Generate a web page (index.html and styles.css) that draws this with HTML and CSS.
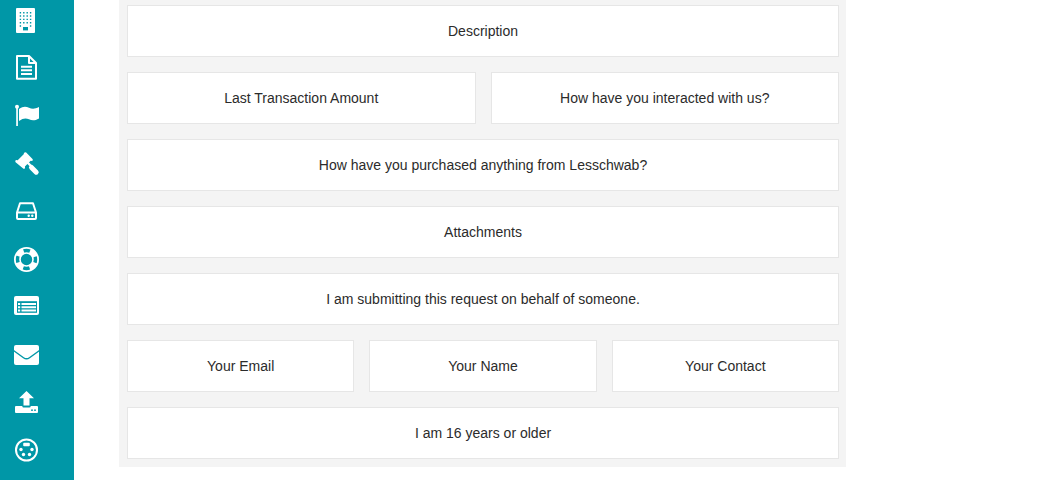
FILE: index.html
```
<!DOCTYPE html>
<html lang="en">
<head>
  <meta charset="UTF-8" />
  <meta name="viewport" content="width=device-width, initial-scale=1.0" />
  <title>Form Layout</title>
  <link rel="stylesheet" href="styles.css">
</head>
<body>
  <nav class="sidebar">
    <a href="#" aria-label="Company">
      <svg class="icon" viewBox="0 0 26 26">
        <rect x="2" y="2" width="19" height="25" rx="1" />
        <path class="cut-line" stroke-width="1.4" stroke-dasharray="1.4 2" d="M5.700 6.700h12M5.700 10h12M5.700 13.400h12M5.700 16.700h12M5.700 20h2M15.900 20h2" />
        <rect class="cut" x="9" y="21" width="5" height="3.400" />
      </svg>
    </a>
    <a href="#" aria-label="Documents">
      <svg class="icon" viewBox="0 0 26 26">
        <path class="line" stroke-width="2" stroke-linejoin="round" d="M3 2h12l7 7v15.700H3zM15 2v7h7" />
        <path class="line" stroke-width="2" d="M7 12.700h11M7 16.300h11M7 20h11" />
      </svg>
    </a>
    <a href="#" aria-label="Flags">
      <svg class="icon" viewBox="0 0 26 26">
        <circle cx="3" cy="4.700" r="2" />
        <rect x="2.200" y="5" width="1.700" height="19" />
        <path d="M5 7C9 4 12 4.300 15 5.700S21 7 25 5v11.500c-4 2.300-7 2.300-10 .8S9 16 5 19z" />
      </svg>
    </a>
    <a href="#" aria-label="Legal">
      <svg class="icon" viewBox="0 0 26 26">
        <path d="M10 3q1-1.500 2.200-.4l6.300 6.300q1 1.200-.4 2l-1.400-.2-5.800 5.800.2 1.400q-1 1.600-2.200.4L1.600 12.300q-1-1.300.4-2.200l1.700.2 6-6z" />
        <path class="line" stroke-width="2.400" d="M13 12l4 4" />
        <path class="line" stroke-width="5" stroke-linecap="round" d="M17.500 17.500l4.700 4.700" />
      </svg>
    </a>
    <a href="#" aria-label="Storage">
      <svg class="icon" viewBox="0 0 26 26">
        <path class="line" stroke-width="2" stroke-linejoin="round" d="M3 14.500L6 5.300h13l3 9.200v5.500q0 1-1 1H4q-1 0-1-1zM3 14.500h19" />
        <circle cx="14.700" cy="17.700" r="1.200" />
        <circle cx="18.300" cy="17.700" r="1.200" />
      </svg>
    </a>
    <a href="#" aria-label="Support">
      <svg class="icon" viewBox="0 0 26 26">
        <circle class="line" cx="12.500" cy="13.500" r="11.600" stroke-width="1.800" />
        <circle class="line" cx="12.500" cy="13.500" r="9" stroke-width="5" stroke-dasharray="7.740 6.400" stroke-dashoffset="-3.200" />
        <circle class="line" cx="12.500" cy="13.500" r="6.500" stroke-width="1.600" />
      </svg>
    </a>
    <a href="#" aria-label="Lists">
      <svg class="icon" viewBox="0 0 26 26">
        <rect x="0" y="2" width="25" height="19" rx="2" />
        <rect class="cut" x="3" y="7.200" width="20" height="11.600" />
        <path class="line" stroke-width="2" d="M4 10h2.200M7.500 10H22M4 13.200h2.200M7.500 13.200H22M4 16.500h2.200M7.500 16.500H22" />
      </svg>
    </a>
    <a href="#" aria-label="Mail">
      <svg class="icon" viewBox="0 0 26 26">
        <rect x="0" y="3" width="25" height="20" rx="2" />
        <path class="cut-line" stroke-width="1.400" d="M-.5 8.500L9.500 15.700q3 2.200 6 0L25.500 8.500" />
      </svg>
    </a>
    <a href="#" aria-label="Upload">
      <svg class="icon" viewBox="0 0 26 26">
        <path d="M12.500 1l7.500 7.200h-4.500v7.300h-6V8.200H5z" />
        <path d="M2 16h6.200q.3 1.500 1.300 1.500h6q1 0 1.300-1.500H23q1 0 1 1v5q0 1-1 1H2q-1 0-1-1v-5q0-1 1-1z" />
        <circle class="cut" cx="18" cy="20.200" r=".9" />
        <circle class="cut" cx="21" cy="20.200" r=".9" />
      </svg>
    </a>
    <a href="#" aria-label="Connections">
      <svg class="icon" viewBox="0 0 26 26">
        <circle class="line" cx="12.500" cy="12" r="10.500" stroke-width="2" />
        <rect x="9.200" y="4.800" width="6.600" height="3.400" rx="1" />
        <circle cx="7" cy="11.500" r="1.700" />
        <circle cx="18" cy="11.500" r="1.700" />
        <circle cx="9.500" cy="16.500" r="1.700" />
        <circle cx="15.500" cy="16.500" r="1.700" />
      </svg>
    </a>
  </nav>

  <main class="content">
    <div class="form-layout">
      <div class="row">
        <div class="field">Description</div>
      </div>
      <div class="row">
        <div class="field">Last Transaction Amount</div>
        <div class="field">How have you interacted with us?</div>
      </div>
      <div class="row">
        <div class="field">How have you purchased anything from Lesschwab?</div>
      </div>
      <div class="row">
        <div class="field">Attachments</div>
      </div>
      <div class="row">
        <div class="field">I am submitting this request on behalf of someone.</div>
      </div>
      <div class="row">
        <div class="field">Your Email</div>
        <div class="field">Your Name</div>
        <div class="field">Your Contact</div>
      </div>
      <div class="row">
        <div class="field">I am 16 years or older</div>
      </div>
    </div>
  </main>
</body>
</html>
```
FILE: styles.css
```
* {
  box-sizing: border-box;
}

body {
  display: flex;
  min-height: 100vh;
  margin: 0;
  background: #fff;
  color: #2b2b2b;
  font-family: "Liberation Sans", Arial, sans-serif;
  font-size: 14px;
  line-height: 20px;
}

/* Sidebar */
.sidebar {
  display: flex;
  flex-direction: column;
  flex-shrink: 0;
  gap: 22px;
  width: 74px;
  padding: 6px 14px;
  background: #0097a7;
}

.sidebar a {
  display: block;
  height: 26px;
}

.icon {
  display: block;
  width: 26px;
  height: 26px;
  overflow: visible;
  fill: #fff;
}

.icon .line {
  fill: none;
  stroke: #fff;
}

.icon .cut {
  fill: #0097a7;
}

.icon .cut-line {
  fill: none;
  stroke: #0097a7;
}

/* Form rows */
.content {
  flex: 1;
  padding: 0 45px;
}

.form-layout {
  display: flex;
  flex-direction: column;
  gap: 15px;
  max-width: 727px;
  padding: 5px 7px 8px 8px;
  background: #f4f4f4;
}

.row {
  display: flex;
  gap: 15px;
}

.field {
  flex: 1;
  padding: 15px;
  border: 1px solid #e6e6e6;
  background: #fff;
  text-align: center;
}
```
